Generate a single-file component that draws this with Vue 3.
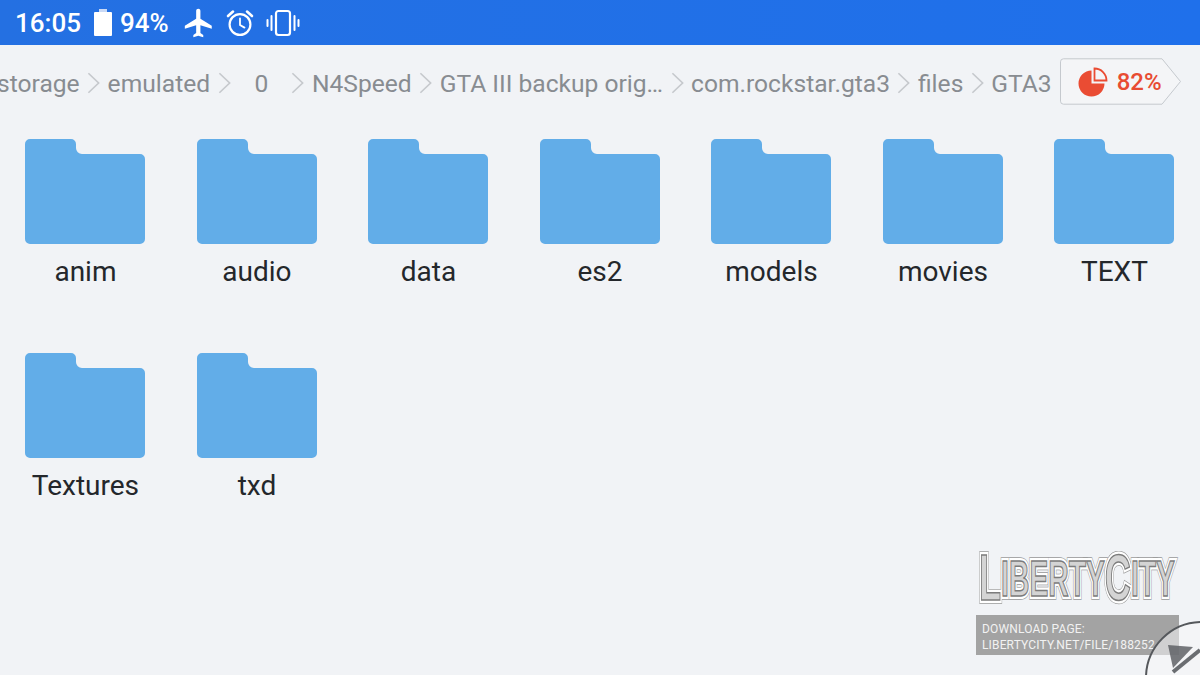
<template>
  <div class="screen">
    <header class="status-bar">
      <span class="clock">16:05</span>
      <span class="battery"></span>
      <span class="percent">94%</span>
      <svg class="ico plane" viewBox="0 0 24 24"><path d="M21 16v-2l-8-5V3.5c0-.83-.67-1.5-1.5-1.5S10 2.67 10 3.5V9l-8 5v2l8-2.5V19l-2 1.5V22l3.5-1 3.5 1v-1.5L13 19v-5.5l8 2.5z" fill="#fff" /></svg>
      <svg class="ico alarm" viewBox="0 0 28 28" fill="none" stroke="#fff" stroke-width="2.2" stroke-linecap="round">
        <circle cx="14" cy="15.5" r="10.4" />
        <path d="M14 9.5v6.5l4.5 2.6" stroke-width="1.8" />
        <path d="M2 7l5-4.4M26 7l-5-4.4" stroke-width="2.6" />
      </svg>
      <svg class="ico vibrate" viewBox="0 0 34 28" fill="none" stroke="#fff" stroke-linecap="round">
        <rect x="10" y="2" width="14" height="24" rx="2.5" stroke-width="2.2" />
        <path d="M5.5 7v14M28.5 7v14" stroke-width="2" />
        <path d="M1.5 11v6M32.5 11v6" stroke-width="2" />
      </svg>
    </header>

    <nav class="crumbs">
      <template v-for="c in crumbs" :key="c.name">
        <span class="crumb" :class="c.cls">{{ c.name }}</span>
        <svg class="chev" :class="c.cls" viewBox="0 0 14 24" fill="none" stroke="#c6c9cd" stroke-width="1.8"><path d="M1.5 1.5L12.5 12L1.5 22.5" /></svg>
      </template>
      <span class="crumb">GTA3</span>
      <div class="usage">
        <svg class="usage-shape" viewBox="0 0 122 47" fill="none"><path d="M3.5 .8H102L120.5 23.5L102 46.2H3.5a3 3 0 0 1-3-3V3.8a3 3 0 0 1 3-3z" fill="#f4f5f7" stroke="#c5c9ce" /></svg>
        <svg class="pie" viewBox="0 0 30 30"><path d="M13.5 3.5A13 13 0 1 0 26.5 16.5H13.5z" fill="#ea4c33" /><path d="M16.5 1.5A12 12 0 0 1 28.5 13.5H16.5z" fill="none" stroke="#ea4c33" stroke-width="1.8" /></svg>
        <span class="usage-num">82%</span>
      </div>
    </nav>

    <main class="grid">
      <div v-for="f in folders" :key="f" class="folder">
        <svg class="folder-ico" viewBox="0 0 120 105"><path d="M0 5a5 5 0 0 1 5-5H46a5 5 0 0 1 5 5V9a6 6 0 0 0 6 6H115a5 5 0 0 1 5 5V100a5 5 0 0 1-5 5H5a5 5 0 0 1-5-5z" fill="#62ade8" /></svg>
        <span class="folder-name">{{ f }}</span>
      </div>
    </main>

    <svg class="logo" viewBox="0 0 204 54">
      <defs>
        <text id="logo-text" x="4" y="49" textLength="196" lengthAdjust="spacingAndGlyphs"><tspan class="cap">L</tspan><tspan dy="-4">IBERTY</tspan><tspan class="cap" dy="4">C</tspan><tspan dy="-4">ITY</tspan></text>
      </defs>
      <use href="#logo-text" class="logo-edge" />
      <use href="#logo-text" class="logo-band" />
      <use href="#logo-text" class="logo-fill" />
    </svg>

    <div class="mark">
      <div>DOWNLOAD PAGE:</div>
      <div>LIBERTYCITY.NET/FILE/188252</div>
    </div>

    <div class="corner">
      <svg viewBox="0 0 56 46" class="corner-ico">
        <path d="M13 6L38 8L18 29z" fill="#5f6266" fill-opacity=".85" />
        <path d="M18 33L45 11" stroke="#6a6d71" stroke-width="4" fill="none" />
      </svg>
    </div>
  </div>
</template>

<script setup>
const crumbs = [
  { name: 'storage', cls: 'first' },
  { name: 'emulated', cls: 'wide' },
  { name: '0', cls: 'zero' },
  { name: 'N4Speed' },
  { name: 'GTA III backup orig…' },
  { name: 'com.rockstar.gta3' },
  { name: 'files' }
]

const folders = ['anim', 'audio', 'data', 'es2', 'models', 'movies', 'TEXT', 'Textures', 'txd']
</script>

<style>
body {
  margin: 0;
  background: #f1f3f6;
}
</style>

<style scoped>
.screen {
  position: relative;
  width: 1200px;
  height: 675px;
  overflow: hidden;
  background: #f1f3f6;
  font-family: Roboto, "Liberation Sans", sans-serif;
}

.status-bar {
  height: 45px;
  display: flex;
  align-items: center;
  padding-left: 15px;
  background: linear-gradient(90deg, #2470e2, #1f70eb);
  color: #fff;
  font-size: 26px;
  font-weight: 500;
}

.battery {
  position: relative;
  width: 18px;
  height: 24px;
  margin: 2px 0 0 13px;
  background: #fff;
  border-radius: 1px;
}

.battery::before {
  content: '';
  position: absolute;
  top: -3px;
  left: 5px;
  width: 8px;
  height: 3px;
  background: #c9d9f5;
}

.percent {
  margin-left: 8px;
}

.ico {
  flex: none;
}

.plane {
  width: 34px;
  height: 34px;
  margin-left: 13px;
}

.alarm {
  width: 28px;
  height: 28px;
  margin-left: 10px;
}

.vibrate {
  width: 34px;
  height: 28px;
  margin-left: 12px;
}

.crumbs {
  height: 76px;
  display: flex;
  align-items: center;
  margin-left: -3px;
  color: #888c91;
  font-size: 24.6px;
  white-space: nowrap;
}

.chev {
  flex: none;
  width: 13px;
  height: 24px;
  margin: 0 7.5px;
}

.chev.zero {
  margin-left: 23px;
}

.crumb.zero {
  margin-left: 16.5px;
}

.usage {
  position: relative;
  flex: none;
  width: 122px;
  height: 47px;
  margin: -3px 0 0 8px;
  display: flex;
  align-items: center;
}

.usage-shape {
  position: absolute;
  inset: 0;
  width: 122px;
  height: 47px;
}

.pie {
  position: relative;
  width: 30px;
  height: 30px;
  margin-left: 18px;
}

.usage-num {
  position: relative;
  margin-left: 9px;
  color: #e84c32;
  font-size: 24px;
  font-weight: 500;
}

.grid {
  display: grid;
  grid-template-columns: repeat(7, 171.5px);
  grid-auto-rows: 214px;
  margin: 18px 0 0 -.3px;
}

.folder {
  display: flex;
  flex-direction: column;
  align-items: center;
}

.folder-ico {
  width: 120px;
  height: 105px;
}

.folder-name {
  margin-top: 11px;
  color: #24272b;
  font-size: 28px;
  line-height: 34px;
}

.logo {
  position: absolute;
  left: 975px;
  top: 551px;
  width: 204px;
  height: 54px;
}

#logo-text {
  font-family: "Liberation Sans", sans-serif;
  font-weight: 700;
  font-size: 50px;
  stroke-linejoin: miter;
}

.cap {
  font-size: 64px;
}

.logo-edge {
  fill: #9a9a9a;
  stroke: #9a9a9a;
  stroke-width: 7.5;
}

.logo-band {
  fill: #fff;
  stroke: #fff;
  stroke-width: 6;
}

.logo-fill {
  fill: #d4d4d4;
  stroke: #7c7c7c;
  stroke-width: 1.5;
}

.mark {
  position: absolute;
  left: 976px;
  top: 615px;
  width: 203px;
  height: 40px;
  box-sizing: border-box;
  padding: 7px 0 0 6px;
  background: #a3a3a3;
  color: #f2f2f2;
  font-size: 12px;
  line-height: 15.5px;
  letter-spacing: .15px;
  white-space: nowrap;
}

.corner {
  position: absolute;
  left: 1145px;
  top: 621px;
  width: 110px;
  height: 110px;
  border: 2px solid #55585c;
  border-radius: 50%;
  background: rgba(245, 246, 248, .55);
}

.corner-ico {
  position: absolute;
  left: 8px;
  top: 16px;
  width: 56px;
  height: 46px;
}
</style>
